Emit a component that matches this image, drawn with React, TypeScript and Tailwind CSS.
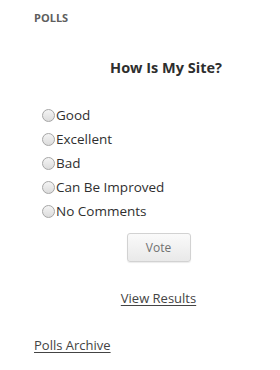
import React from "react";

const options = ["Good", "Excellent", "Bad", "Can Be Improved", "No Comments"];

function Radio() {
  return (
    <span className="inline-block w-[13px] h-[13px] rounded-full border border-[#a6a6a6] bg-gradient-to-b from-[#f4f4f4] to-[#dcdcdc] shrink-0" />
  );
}

export default function App() {
  return (
    <div
      className="w-[280px] h-[370px] bg-white text-[#333] pl-[34px] pr-[20px]"
      style={{ fontFamily: '"Open Sans", "Noto Sans", sans-serif' }}
    >
      <div className="pt-[11px] text-[11px] font-bold uppercase text-[#5e5e5e] leading-[14px]">Polls</div>
      <div className="mt-[33px] text-center text-[14.5px] font-bold text-[#2e2e2e] leading-[20px] pl-[38px]">
        How Is My Site?
      </div>
      <ul className="mt-[25px] flex flex-col">
        {options.map((o) => (
          <li key={o} className="flex items-center h-[24px] pl-[8px] text-[13.5px] text-[#2f2f2f]">
            <Radio />
            <span className="ml-[1px]">{o}</span>
          </li>
        ))}
      </ul>
      <div className="flex justify-center mt-[10px] pl-[23px]">
        <button className="w-[64px] h-[29px] rounded-[3px] border border-[#d2d2d2] bg-gradient-to-b from-[#fafafa] to-[#e9e9e9] text-[12px] text-[#707070] shadow-[0_1px_1px_rgba(0,0,0,0.08)]">
          Vote
        </button>
      </div>
      <div className="mt-[23px] text-center pl-[23px]">
        <a className="text-[13px] text-[#444] underline underline-offset-2">View Results</a>
      </div>
      <div className="mt-[23px]">
        <a className="text-[13px] text-[#444] underline underline-offset-2">Polls Archive</a>
      </div>
    </div>
  );
}
